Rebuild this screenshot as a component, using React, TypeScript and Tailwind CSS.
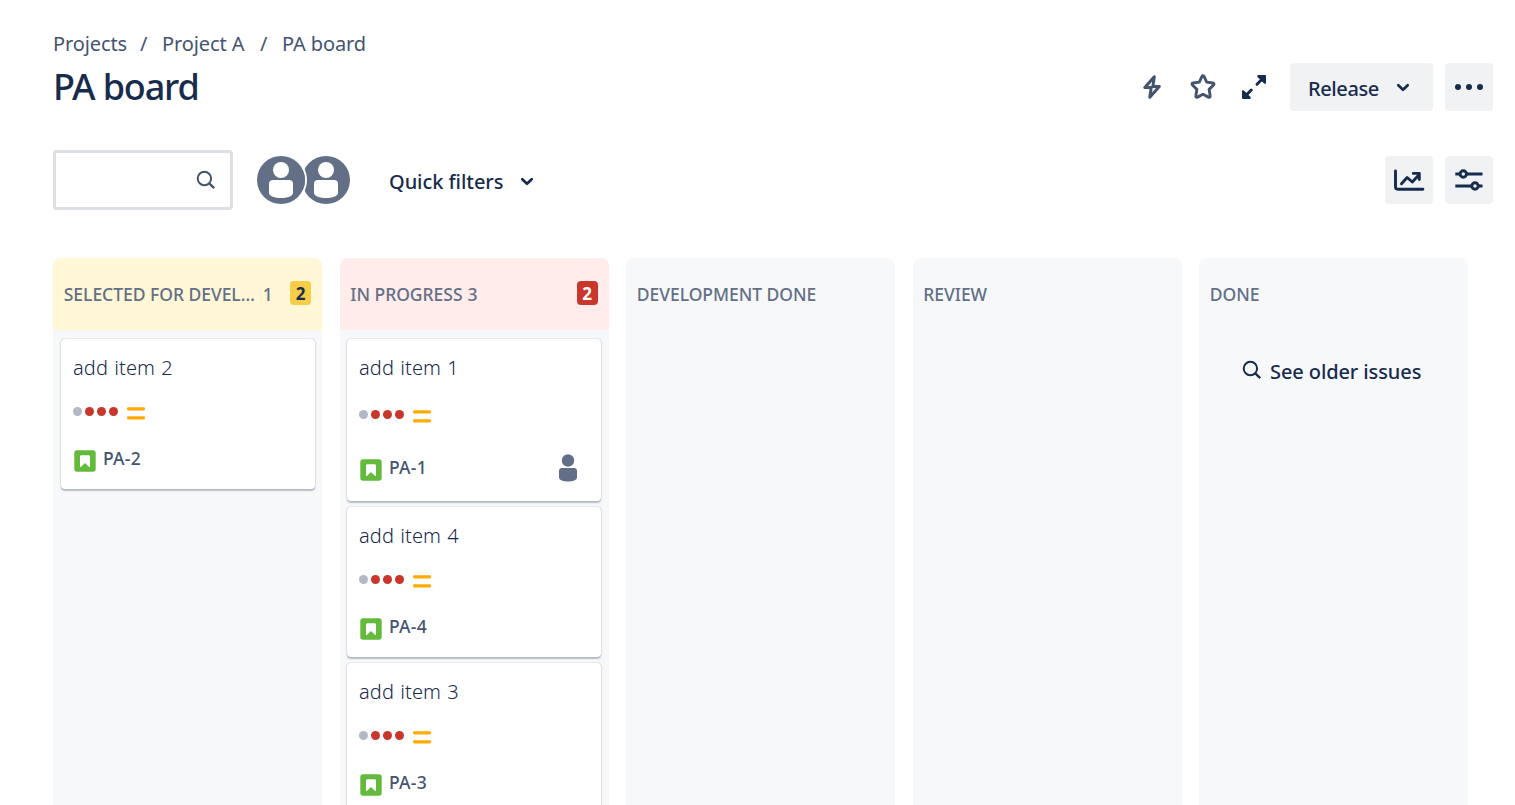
import React from "react";

type Issue = { title: string; id: string; assigned?: boolean };

const Chevron = () => (
  <svg width="14" height="10" viewBox="0 0 14 10" fill="none" stroke="#172b4d" strokeWidth="2.7" strokeLinecap="round" strokeLinejoin="round">
    <path d="M2.3 2.3 7 6.8l4.7-4.5" />
  </svg>
);

const SearchIcon = ({ color }: { color: string }) => (
  <svg width="20" height="20" viewBox="0 0 20 20" fill="none" stroke={color} strokeWidth="2">
    <circle cx="8.4" cy="8.5" r="6.7" />
    <path d="m13 13.2 5.2 5" strokeWidth="2.3" />
  </svg>
);

const Bolt = () => (
  <svg width="20" height="26" viewBox="0 0 20 26" fill="none" stroke="#44546f" strokeWidth="3" strokeLinejoin="round">
    <path d="M12.300 2.800 2.800 13.600h6.400L7.800 23.200 17.300 12.400h-6.400Z" />
  </svg>
);

const Star = () => (
  <svg width="28" height="28" viewBox="0 0 28 28" fill="none" stroke="#44546f" strokeWidth="2.9" strokeLinejoin="round">
    <path d="M14 2.8c.5 0 .8.2 1 .6l2.7 5.7 6.2.9c1.1.2 1.4 1.3.7 2l-4.5 4.4 1.1 6.4c.2 1-.8 1.700-1.700 1.300L14 21.200l-5.500 2.900c-.9.4-1.900-.3-1.700-1.300l1.100-6.400L3.400 12c-.7-.7-.4-1.800.7-2l6.200-.9L13 3.400c.2-.4.5-.6 1-.6Z" />
  </svg>
);

const Expand = () => (
  <svg width="26" height="26" viewBox="0 0 26 26" fill="none" stroke="#172b4d" strokeWidth="3" strokeLinecap="round">
    <path d="m16 10.300 6-6M10.300 16l-6 6" />
    <path d="M17.500 1h6.500a1 1 0 0 1 1 1v6.500c0 1.500-1.300 1.700-2.200.8l-6.100-6.100C15.800 2.300 16 1 17.500 1ZM1 17.500V24a1 1 0 0 0 1 1h6.500c1.500 0 1.700-1.300.8-2.200l-6.100-6.100C2.300 15.800 1 16 1 17.500Z" fill="#172b4d" stroke="none" />
  </svg>
);

const Chart = () => (
  <svg width="32" height="24" viewBox="0 0 32 24" fill="none" stroke="#172b4d" strokeWidth="3" strokeLinecap="round" strokeLinejoin="round">
    <path d="M2.500 3v15.800c0 1.600.8 2.400 2.400 2.400h25" strokeWidth="2.900" />
    <path d="m8.500 15.800 5.600-6.300 5.200 4.500 6.300-6.700M20.300 5.400h6v6.200" strokeWidth="2.900" />
  </svg>
);

const Sliders = () => (
  <svg width="28" height="24" viewBox="0 0 28 24" fill="none" stroke="#172b4d" strokeWidth="2.900">
    <path d="M.3 6h5.200M11.500 6h16M.3 18h16.400M22.700 18h4.800" />
    <circle cx="8.300" cy="6" r="3.200" />
    <circle cx="20" cy="18" r="3.200" />
  </svg>
);

const Avatar = () => (
  <svg width="48" height="48" viewBox="0 0 48 48">
    <circle cx="24" cy="24" r="24" fill="#626f86" />
    <circle cx="24" cy="14" r="8" fill="#fff" />
    <path d="M16 24h16a4 4 0 0 1 4 4v9c0 3-6 5-12 5s-12-2-12-5v-9a4 4 0 0 1 4-4Z" fill="#fff" />
  </svg>
);

const Person = () => (
  <svg width="20" height="28" viewBox="0 0 20 28" fill="#626f86">
    <circle cx="10" cy="6.500" r="6.200" />
    <path d="M4 14h12a3 3 0 0 1 3 3v6.500c0 2.600-4.500 4-9 4s-9-1.400-9-4V17a3 3 0 0 1 3-3Z" />
  </svg>
);

const Story = () => (
  <svg width="22" height="22" viewBox="0 0 22 22">
    <rect x=".3" y=".3" width="21.400" height="21.400" rx="2.700" fill="#63ba3c" />
    <path d="M7.400 5.200h7.200c.8 0 1.400.6 1.400 1.400v9.800c0 .7-.6.900-1.100.4L11 12.900l-3.900 3.900c-.5.5-1.100.3-1.100-.4V6.600c0-.8.600-1.400 1.400-1.400Z" fill="#fff" />
  </svg>
);

const DayDots = () => (
  <div className="flex gap-[3px]">
    <span className="size-[9px] rounded-full bg-[#b3b9c4]" />
    <span className="size-[9px] rounded-full bg-[#c9372c]" />
    <span className="size-[9px] rounded-full bg-[#c9372c]" />
    <span className="size-[9px] rounded-full bg-[#c9372c]" />
  </div>
);

const MediumPriority = () => (
  <svg width="18" height="13" viewBox="0 0 18 13" fill="#ffab00" className="mt-[3px]">
    <rect width="18" height="3.200" y=".2" rx="1.300" />
    <rect width="18" height="3.200" y="9.200" rx="1.300" />
  </svg>
);

const Card = ({ title, id, assigned }: Issue) => (
  <article className="shrink-0 rounded-[4px] bg-white pl-3 pr-[23px] pt-[15px] shadow-[0_1.5px_1.5px_rgba(9,30,66,0.25),0_0_1.5px_rgba(9,30,66,0.31)]">
    <h3 className="text-[20px] font-[350] leading-7 tracking-[0.1px] text-[#172b4d] [word-spacing:1px]">{title}</h3>
    <div className={assigned ? "mt-[18px] flex h-[29px] items-center gap-[9px]" : "mt-[17px] flex h-6 items-center gap-[9px]"}>
      <DayDots />
      <span className={assigned ? "" : "mt-[2px]"}>
        <MediumPriority />
      </span>
    </div>
    <div className={assigned ? "mb-[13px] mt-[23px] flex h-9 items-center" : "mb-[14px] mt-6 flex h-7 items-center"}>
      <span className="ml-px">
        <Story />
      </span>
      <span className="-mt-[6px] ml-[7px] text-[17.5px] font-medium leading-6 tracking-[0.25px] text-[#44546f]">{id}</span>
      {assigned && (
        <span className="-mt-1 ml-auto">
          <Person />
        </span>
      )}
    </div>
  </article>
);

type ColumnProps = {
  title: string;
  count?: number;
  tone?: "min" | "max";
  children?: React.ReactNode;
};

const headTone = { min: "bg-[#fff7d6]", max: "bg-[#ffeceb]" };
const badgeTone = { min: "bg-[#f5cd47] text-[#172b4d]", max: "bg-[#c9372c] text-white" };

const Column = ({ title, count, tone, children }: ColumnProps) => (
  <section className="flex w-[269px] shrink-0 flex-col overflow-hidden rounded-t-lg bg-[#f7f8f9]">
    <header className={`flex h-[72px] shrink-0 items-center pl-[10.75px] pr-[11px] text-[17.5px] font-medium leading-6 text-[#626f86] ${tone ? headTone[tone] : ""}`}>
      <h2 className="whitespace-nowrap tracking-[-0.03px]">{title}</h2>
      {count !== undefined && <span className={tone === "min" ? "ml-2" : "ml-[5px]"}>{count}</span>}
      {tone && (
        <span className={`-mt-[2px] ml-auto flex h-6 w-[21px] items-center justify-center rounded-[4px] text-[17px] font-bold ${badgeTone[tone]}`}>
          <span className="mt-px">2</span>
        </span>
      )}
    </header>
    {children}
  </section>
);

export default function App() {
  return (
    <main className="flex h-[805px] w-[1515px] flex-col overflow-hidden bg-white pl-[53px] pt-[30px] font-['Noto_Sans',sans-serif] text-[#172b4d]">
      <nav className="flex h-7 text-[20px] leading-7 tracking-[-0.1px] text-[#44546f]">
        <span className="w-[87px]">Projects</span>
        <span className="w-[22px]">/</span>
        <span className="w-[98px] whitespace-nowrap">Project A</span>
        <span className="w-[22px]">/</span>
        <span>PA board</span>
      </nav>
      <div className="mt-[5px] flex h-12 items-start pr-[22px]">
        <h1 className="text-[36px] font-medium leading-[48px] tracking-[-1.15px]">PA board</h1>
        <div className="ml-auto flex h-12 items-center">
          <Bolt />
          <span className="ml-[27px]">
            <Star />
          </span>
          <span className="ml-6">
            <Expand />
          </span>
          <button className="ml-[23px] flex h-12 w-[143px] items-center justify-between rounded-[4px] bg-[#f1f2f4] pl-[18px] pr-[23px] text-[20px] font-medium tracking-[-0.4px]">
            <span className="mt-[3px]">Release</span>
            <span className="mt-[2px]">
              <Chevron />
            </span>
          </button>
          <button className="ml-3 flex size-12 items-center justify-center gap-[5px] rounded-[4px] bg-[#f1f2f4]">
            <span className="size-[6px] rounded-full bg-[#172b4d]" />
            <span className="size-[6px] rounded-full bg-[#172b4d]" />
            <span className="size-[6px] rounded-full bg-[#172b4d]" />
          </button>
        </div>
      </div>
      <div className="mt-[39px] flex h-[60px] items-center pr-[22px]">
        <div className="flex h-[60px] w-[180px] items-center justify-end rounded-[4px] border-[3px] border-[#dcdfe4] pr-[14px]">
          <SearchIcon color="#44546f" />
        </div>
        <div className="ml-6 flex">
          <span className="z-10 size-12 rounded-full ring-[2px] ring-white">
            <Avatar />
          </span>
          <span className="-ml-[3px]">
            <Avatar />
          </span>
        </div>
        <button className="ml-[39px] mt-[3px] flex items-center gap-[17px] text-[20px] font-medium tracking-[-0.05px]">
          Quick filters
          <Chevron />
        </button>
        <button className="ml-auto flex size-12 items-center justify-center rounded-[4px] bg-[#f1f2f4]">
          <Chart />
        </button>
        <button className="ml-3 flex size-12 items-center justify-center rounded-[4px] bg-[#f1f2f4]">
          <Sliders />
        </button>
      </div>
      <div className="mt-12 flex min-h-0 flex-1 gap-[17.5px]">
        <Column title="SELECTED FOR DEVEL…" count={1} tone="min">
          <div className="flex flex-col gap-1.5 pl-2 pr-[7px] pt-[9px]">
            <Card title="add item 2" id="PA-2" />
          </div>
        </Column>
        <Column title="IN PROGRESS" count={3} tone="max">
          <div className="flex flex-col gap-1.5 pl-[7.5px] pr-[7.5px] pt-[9px]">
            <Card title="add item 1" id="PA-1" assigned />
            <Card title="add item 4" id="PA-4" />
            <Card title="add item 3" id="PA-3" />
          </div>
        </Column>
        <Column title="DEVELOPMENT DONE" />
        <Column title="REVIEW" />
        <Column title="DONE">
          <button className="ml-[43px] mt-[26px] flex items-center gap-2 text-[20px] font-medium leading-7 tracking-[-0.1px]">
            <span className="-mt-[3px]">
              <SearchIcon color="#172b4d" />
            </span>
            <span className="mt-[2px]">See older issues</span>
          </button>
        </Column>
      </div>
    </main>
  );
}
